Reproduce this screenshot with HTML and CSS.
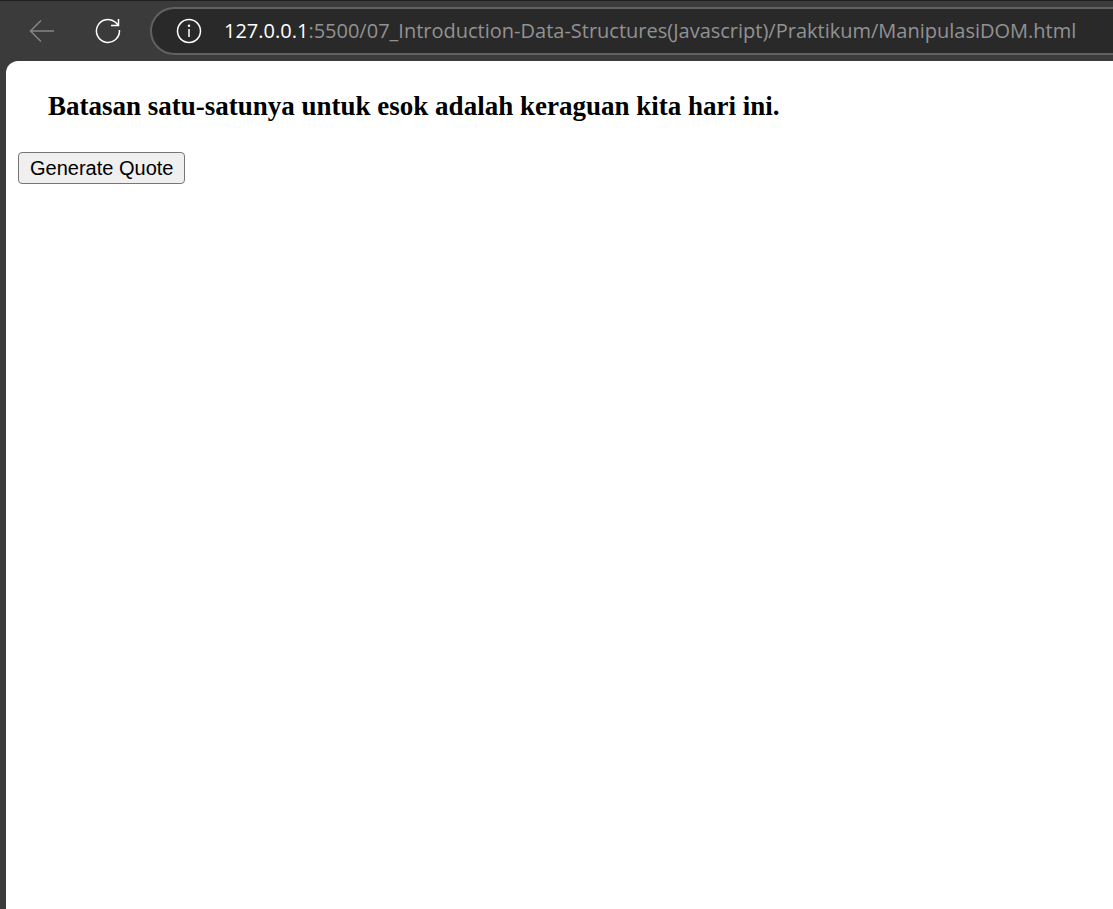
FILE: index.html
```html
<!DOCTYPE html>
<html lang="id">
<head>
<meta charset="utf-8">
<title>ManipulasiDOM</title>
<link rel="stylesheet" href="styles.css">
</head>
<body>
<header class="toolbar">
  <button class="nav-button nav-button-disabled" type="button" aria-label="Back">
    <svg class="icon" viewBox="0 0 26 26"><path d="M25 13H1.5M12 2.500L1.500 13L12 23.500"/></svg>
  </button>
  <button class="nav-button" type="button" aria-label="Refresh">
    <svg class="icon" viewBox="0 0 26 26"><path d="M24.400 12A11.500 11.500 0 1 1 20.500 4.300L23.500 7.500M23.500 1V7.500H16"/></svg>
  </button>
  <div class="address-bar">
    <button class="site-info" type="button" aria-label="Site information">
      <svg class="icon" viewBox="0 0 26 26"><circle cx="13" cy="13" r="11.500"/><path d="M13 11V19"/><circle class="dot" cx="13" cy="7.800" r="1.200"/></svg>
    </button>
    <div class="url" role="textbox" aria-label="Address" contenteditable="true" spellcheck="false"><span class="host">127.0.0.1</span>:5500/07_Introduction-Data-Structures(Javascript)/Praktikum/ManipulasiDOM.html</div>
  </div>
</header>
<main class="page">
  <h3 class="quote">Batasan satu-satunya untuk esok adalah keraguan kita hari ini.</h3>
  <button class="generate" type="button">Generate Quote</button>
</main>
</body>
</html>
```
FILE: styles.css
```css
* {
  box-sizing: border-box;
}

body {
  display: flex;
  flex-direction: column;
  min-height: 100vh;
  margin: 0;
  overflow-x: hidden;
  background: #3b3b3b;
}

.toolbar {
  display: flex;
  align-items: center;
  padding: 6px 0 6px 9px;
  border-top: 1px solid #202020;
}

.nav-button,
.site-info {
  display: flex;
  flex: none;
  align-items: center;
  justify-content: center;
  padding: 0;
  border: 0;
  background: none;
  color: #fff;
}

.nav-button {
  width: 66px;
  height: 48px;
}

.nav-button-disabled {
  color: #858585;
}

.icon {
  width: 26px;
  height: 26px;
  fill: none;
  stroke: currentColor;
  stroke-width: 1.5;
}

.dot {
  fill: currentColor;
  stroke: none;
}

.address-bar {
  display: flex;
  flex: 1;
  align-items: center;
  gap: 22px;
  min-width: 0;
  height: 48px;
  margin-left: 9px;
  padding-left: 24px;
  border: 2px solid #616161;
  border-right: 0;
  border-radius: 24px 0 0 24px;
  background: #292929;
}

.url {
  flex: 1;
  min-width: 0;
  overflow: hidden;
  white-space: nowrap;
  color: #929292;
  font: 20px/32px "Open Sans", sans-serif;
}

.host {
  color: #fff;
}

.page {
  flex: 1;
  margin-left: 6px;
  padding: 30px 12px;
  border-top-left-radius: 12px;
  background: #fff;
}

.quote {
  margin: 0 0 30px;
  padding-left: 30px;
  font: bold 27px/31px "Liberation Serif", serif;
}

.generate {
  height: 32px;
  padding: 0 11px;
  border: 1px solid #767676;
  border-radius: 4px;
  background: #efefef;
  color: #000;
  font: 20px/30px "Liberation Sans", sans-serif;
}
```
